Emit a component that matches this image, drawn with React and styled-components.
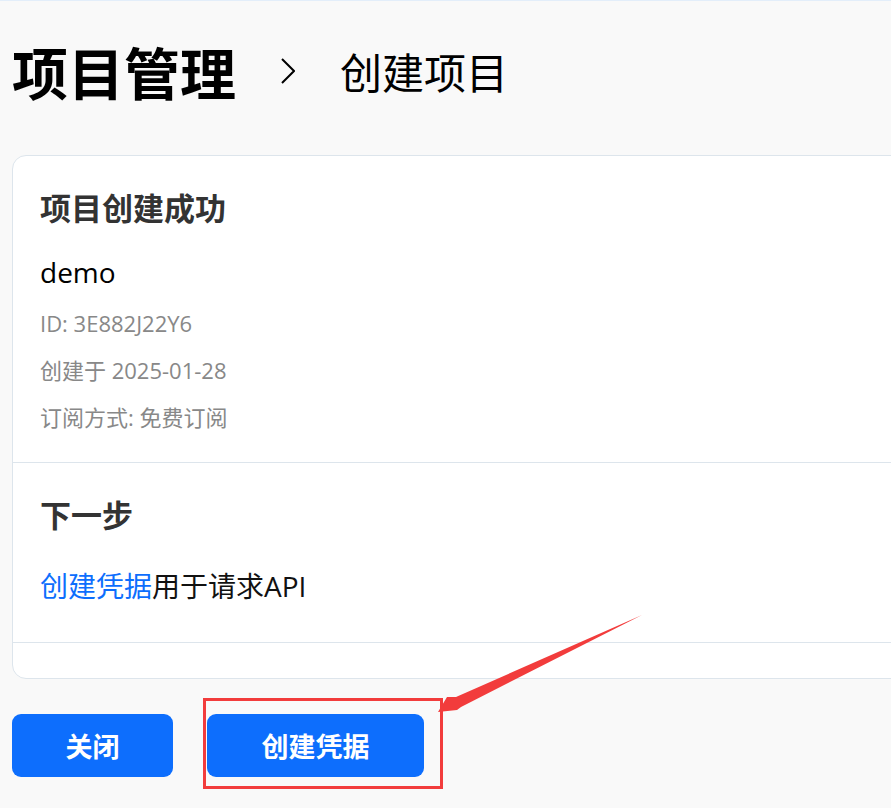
import React from "react";
import styled, { createGlobalStyle } from "styled-components";

const GlobalStyle = createGlobalStyle`
  html, body {
    margin: 0;
    padding: 0;
    background: #f9f9f9;
    overflow: hidden;
  }
  body {
    border-top: 1px solid #e3eefa;
    font-family: "Open Sans", "Noto Sans CJK SC", sans-serif;
    color: #111;
  }
`;

const Page = styled.div`
  position: relative;
  padding: 0 0 0 12px;
  width: 879px;
  height: 807px;
`;

const Header = styled.header`
  display: flex;
  align-items: center;
  padding-top: 40px;
  height: 64px;
`;

const Title = styled.h1`
  margin: 0;
  font-size: 56px;
  line-height: 64px;
  font-weight: 700;
  color: #000;
`;

const Crumb = styled.span`
  margin-left: 45px;
  font-size: 42px;
  line-height: 60px;
  font-weight: 400;
  color: #000;
`;

const Chevron = styled.svg`
  margin-left: 45px;
  width: 14px;
  height: 26px;
  margin-top: -4px;
`;

const Card = styled.section`
  margin-top: 50px;
  width: 1000px;
  background: #fff;
  border: 1px solid #dde5ec;
  border-radius: 14px;
`;

const Block = styled.div`
  padding: ${(p) => p.$pad};
  border-bottom: ${(p) => (p.$last ? "none" : "1px solid #dde5ec")};
  height: ${(p) => p.$h || "auto"};
  box-sizing: border-box;
`;

const Heading = styled.h2`
  margin: 0;
  font-size: 31px;
  line-height: 40px;
  font-weight: 700;
  color: #333;
`;

const Name = styled.div`
  margin-top: 24px;
  font-size: 28px;
  line-height: 40px;
  color: #000;
`;

const Meta = styled.div`
  margin-top: ${(p) => p.$gap}px;
  font-size: 22px;
  line-height: 30px;
  color: #888;
`;

const Hint = styled.p`
  margin: 31px 0 0;
  font-size: 28px;
  line-height: 40px;
  color: #111;
`;

const Link = styled.a`
  color: #0d6efd;
  text-decoration: none;
`;

const Actions = styled.div`
  position: relative;
  display: flex;
  gap: 34px;
  margin-top: 35px;
`;

const Button = styled.button`
  width: ${(p) => p.$w}px;
  height: 63px;
  border: none;
  border-radius: 9px;
  background: #0d6efd;
  color: #fff;
  font-family: "Open Sans", "Noto Sans CJK SC", sans-serif;
  font-size: 27px;
  font-weight: 700;
  cursor: pointer;
`;

const Highlight = styled.div`
  position: absolute;
  left: 191px;
  top: -16px;
  width: 240px;
  height: 91px;
  box-sizing: border-box;
  border: 3px solid #f23c3c;
  pointer-events: none;
`;

const Overlay = styled.svg`
  position: absolute;
  left: 0;
  top: -1px;
  width: 891px;
  height: 808px;
  pointer-events: none;
`;

export default function App() {
  return (
    <>
      <GlobalStyle />
      <Page>
        <Header>
          <Title>项目管理</Title>
          <Chevron viewBox="0 0 14 26">
            <polyline points="1,1 13,13 1,25" fill="none" stroke="#000" strokeWidth="2" />
          </Chevron>
          <Crumb>创建项目</Crumb>
        </Header>

        <Card>
          <Block $pad="32px 27px 30px">
            <Heading>项目创建成功</Heading>
            <Name>demo</Name>
            <Meta $gap={16}>ID: 3E882J22Y6</Meta>
            <Meta $gap={17}>创建于 2025-01-28</Meta>
            <Meta $gap={17}>订阅方式: 免费订阅</Meta>
          </Block>
          <Block $pad="32px 27px 36px">
            <Heading>下一步</Heading>
            <Hint>
              <Link href="#">创建凭据</Link>用于请求API
            </Hint>
          </Block>
          <Block $last $h="35px" />
        </Card>

        <Actions>
          <Button $w={161}>关闭</Button>
          <Button $w={217}>创建凭据</Button>
          <Highlight />
        </Actions>

        <Overlay viewBox="0 0 891 808">
          <polygon
            points="642,615 456,697 447,697 438,712 457,710 461,707"
            fill="#f23c3c"
          />
        </Overlay>
      </Page>
    </>
  );
}
